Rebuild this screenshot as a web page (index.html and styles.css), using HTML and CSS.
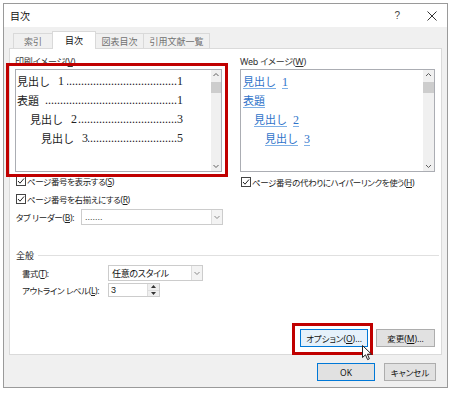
FILE: index.html
```html
<!DOCTYPE html>
<html lang="ja">
<head>
<meta charset="utf-8">
<title>目次</title>
<link rel="stylesheet" href="styles.css">
</head>
<body>
<div class="dialog">
  <div class="titlebar">
    <span class="title">目次</span>
    <span class="help">?</span>
    <svg class="close" width="10" height="10" viewBox="0 0 10 10"><path d="M0.5 0.5 L9.5 9.5 M9.5 0.5 L0.5 9.5" stroke="#333" stroke-width="1" fill="none"/></svg>
  </div>
  <div class="tabs">
    <div class="tab t1">索引</div>
    <div class="tab t2 active">目次</div>
    <div class="tab t3">図表目次</div>
    <div class="tab t4">引用文献一覧</div>
  </div>
  <div class="panel">
    <div class="columns">
      <div class="col col-left">
        <div class="label">印刷イメージ(<u>V</u>)</div>
        <div class="listbox">
          <div class="list-content">
            <div class="toc-row"><span class="jp">見出し</span><span class="num gap">1</span><span class="dots lead">.....................................</span><span class="num">1</span></div>
            <div class="toc-row"><span class="jp">表題</span><span class="dots lead">............................................</span><span class="num">1</span></div>
            <div class="toc-row lv2"><span class="jp">見出し</span><span class="num gap">2</span><span class="dots">.................................</span><span class="num">3</span></div>
            <div class="toc-row lv3"><span class="jp">見出し</span><span class="num gap">3</span><span class="dots">..............................</span><span class="num">5</span></div>
          </div>
          <div class="scrollbar">
            <svg class="arrow" width="10" height="10" viewBox="0 0 10 10"><path d="M2.5 6 L5 3.5 L7.5 6" stroke="#606060" stroke-width="1" fill="none"/></svg>
            <div class="thumb"></div>
            <div class="track"></div>
            <svg class="arrow" width="10" height="10" viewBox="0 0 10 10"><path d="M2.5 4 L5 6.5 L7.5 4" stroke="#606060" stroke-width="1" fill="none"/></svg>
          </div>
        </div>
        <div class="check">
          <span class="box"><svg width="8" height="8" viewBox="0 0 8 8"><path d="M1 4 L3 6.2 L7 1.5" stroke="#222" stroke-width="1" fill="none"/></svg></span>
          <span class="check-text">ページ番号を表示する(<u>S</u>)</span>
        </div>
        <div class="check">
          <span class="box"><svg width="8" height="8" viewBox="0 0 8 8"><path d="M1 4 L3 6.2 L7 1.5" stroke="#222" stroke-width="1" fill="none"/></svg></span>
          <span class="check-text">ページ番号を右揃えにする(<u>R</u>)</span>
        </div>
        <div class="leader-row">
          <span class="leader-label">タブ リーダー(<u>B</u>):</span>
          <div class="select select-leader">
            <span class="select-text">.......</span>
            <span class="select-btn"><svg width="8" height="8" viewBox="0 0 8 8"><path d="M1.5 3 L4 5.5 L6.5 3" stroke="#8a8a8a" stroke-width="1" fill="none"/></svg></span>
          </div>
        </div>
      </div>
      <div class="col col-right">
        <div class="label">Web イメージ(<u>W</u>)</div>
        <div class="listbox listbox-web">
          <div class="list-content">
            <div class="web-row"><span class="link"><span class="jp">見出し</span><span class="num gap">1</span></span></div>
            <div class="web-row"><span class="link"><span class="jp">表題</span></span></div>
            <div class="web-row lvw2"><span class="link"><span class="jp">見出し</span><span class="num gap">2</span></span></div>
            <div class="web-row lvw3"><span class="link"><span class="jp">見出し</span><span class="num gap">3</span></span></div>
          </div>
          <div class="scrollbar scrollbar-web">
            <svg class="arrow" width="11" height="10" viewBox="0 0 11 10"><path d="M3 6 L5.5 3.5 L8 6" stroke="#606060" stroke-width="1" fill="none"/></svg>
            <div class="thumb"></div>
            <div class="track"></div>
            <svg class="arrow" width="11" height="10" viewBox="0 0 11 10"><path d="M3 4 L5.5 6.5 L8 4" stroke="#606060" stroke-width="1" fill="none"/></svg>
          </div>
        </div>
        <div class="check">
          <span class="box"><svg width="8" height="8" viewBox="0 0 8 8"><path d="M1 4 L3 6.2 L7 1.5" stroke="#222" stroke-width="1" fill="none"/></svg></span>
          <span class="check-text">ページ番号の代わりにハイパーリンクを使う(<u>H</u>)</span>
        </div>
      </div>
    </div>
    <div class="group">
      <div class="group-head"><span>全般</span><span class="group-line"></span></div>
      <div class="group-row">
        <span class="group-label">書式(<u>T</u>):</span>
        <div class="select select-format">
          <span class="select-text dark">任意のスタイル</span>
          <span class="select-btn"><svg width="8" height="8" viewBox="0 0 8 8"><path d="M1.5 3 L4 5.5 L6.5 3" stroke="#8a8a8a" stroke-width="1" fill="none"/></svg></span>
        </div>
      </div>
      <div class="group-row row-level">
        <span class="group-label">アウトライン レベル(<u>L</u>):</span>
        <div class="spin">
          <span class="spin-text">3</span>
          <span class="spin-btns">
            <span class="spin-btn"><svg width="7" height="5" viewBox="0 0 7 5"><path d="M1 4 L3.5 1 L6 4 Z" fill="#333"/></svg></span>
            <span class="spin-btn"><svg width="7" height="5" viewBox="0 0 7 5"><path d="M1 1 L3.5 4 L6 1 Z" fill="#333"/></svg></span>
          </span>
        </div>
      </div>
    </div>
    <div class="panel-buttons">
      <button class="btn btn-hover btn-options">オプション(<u>O</u>)...</button>
      <button class="btn btn-change">変更(<u>M</u>)...</button>
    </div>
  </div>
  <div class="footer">
    <button class="btn btn-default btn-ok">OK</button>
    <button class="btn btn-cancel">キャンセル</button>
  </div>
  <div class="highlight hl-preview"></div>
  <div class="highlight hl-options"></div>
  <svg class="cursor" width="11" height="17" viewBox="0 0 11 17"><path d="M0.5 0.5 L0.5 12.5 L3.5 9.8 L5.6 14.6 L7.4 13.8 L5.4 9.2 L9.5 9.2 Z" fill="#fff" stroke="#222" stroke-width="1" stroke-linejoin="round"/></svg>
</div>
</body>
</html>
```

FILE: styles.css
```css
* {
  box-sizing: border-box;
}

body {
  margin: 0;
  background: #ffffff;
  font-family: "Noto Sans", "Noto Sans CJK JP", sans-serif;
  font-size: 9px;
  color: #1a1a1a;
  font-feature-settings: "palt";
}

u {
  text-decoration: underline;
  text-underline-offset: 1px;
}

.dialog {
  position: relative;
  margin: 3px 0 0 3px;
  width: 445px;
  height: 385px;
  border: 1px solid #9a9a9a;
  background: #f0f0f0;
  display: flex;
  flex-direction: column;
}

/* title bar */
.titlebar {
  height: 23px;
  flex: none;
  background: #ffffff;
  display: flex;
  align-items: center;
  padding-left: 6px;
}

.title {
  font-size: 10px;
  color: #111;
}

.help {
  margin-left: auto;
  font-family: "Liberation Sans", sans-serif;
  font-size: 10px;
  color: #444;
}

.close {
  margin-left: 27px;
  margin-right: 10px;
}

/* tabs */
.tabs {
  display: flex;
  align-items: flex-end;
  margin-top: 4px;
  padding-left: 9px;
  height: 17px;
  flex: none;
}

.tab {
  height: 15px;
  border: 1px solid #d9d9d9;
  border-bottom: none;
  background: #f0f0f0;
  color: #707070;
  font-size: 9px;
  display: flex;
  align-items: center;
  justify-content: center;
  margin-right: -1px;
}

.tab.active {
  height: 18px;
  margin-bottom: -1px;
  background: #ffffff;
  color: #111;
  position: relative;
  z-index: 1;
}

.t1 { width: 40px; }
.t2 { width: 44px; }
.t3 { width: 49px; }
.t4 { width: 67px; }

/* panel */
.panel {
  margin: 0 5px;
  height: 307px;
  flex: none;
  background: #ffffff;
  border: 1px solid #dadada;
  padding: 6px 6px 7px 5px;
  display: flex;
  flex-direction: column;
}

.columns {
  display: flex;
  gap: 18px;
}

.col-left {
  width: 207px;
}

.col-right {
  width: 195px;
}

.label {
  height: 14px;
  line-height: 14px;
  color: #333;
  letter-spacing: -0.2px;
}

.listbox {
  height: 103px;
  border: 1px solid #abadb3;
  display: flex;
  background: #fff;
}

.list-content {
  flex: 1;
  padding: 2px 0 0 1px;
  overflow: hidden;
}

.scrollbar {
  width: 10px;
  background: #f0f0f0;
  display: flex;
  flex-direction: column;
}

.scrollbar-web {
  width: 11px;
}

.arrow {
  flex: none;
  display: block;
}

.thumb {
  height: 11px;
  margin-top: 2px;
  background: #cdcdcd;
}

.track {
  flex: 1;
}

.toc-row {
  display: flex;
  align-items: center;
  height: 19px;
  width: 166px;
  font-family: "Liberation Serif", serif;
  font-size: 12px;
  line-height: 19px;
  color: #222;
  white-space: nowrap;
}

.jp {
  font-family: "Noto Sans CJK JP", sans-serif;
  font-size: 11px;
  font-feature-settings: normal;
}

.num {
  font-family: "Liberation Serif", serif;
}

.gap {
  margin-left: 8px;
}

.toc-row .dots {
  flex: 1;
  overflow: hidden;
  direction: rtl;
}

.toc-row .lead {
  margin-left: 3px;
}

.lv2 { padding-left: 13px; }
.lv3 { padding-left: 24px; }

.web-row {
  display: flex;
  align-items: center;
  height: 19px;
  font-family: "Liberation Serif", serif;
  font-size: 12px;
  line-height: 19px;
  padding-left: 1px;
  white-space: nowrap;
}

.web-row .gap {
  margin-left: 6px;
}

.lvw2 { padding-left: 12px; }
.lvw3 { padding-left: 23px; }

.link {
  color: #2f73c9;
  text-decoration: underline;
  text-decoration-color: #7fb0e6;
  text-underline-offset: 2px;
}

/* checkboxes */
.check {
  display: flex;
  align-items: center;
  height: 18px;
  margin-left: 1px;
  color: #222;
  white-space: nowrap;
}

.check-text {
  font-size: 8.5px;
  letter-spacing: -0.4px;
}

.col-left .check:first-of-type,
.col-right .check {
  margin-top: 1px;
}

.box {
  width: 10px;
  height: 10px;
  flex: none;
  border: 1px solid #444;
  margin-right: 1px;
  display: flex;
  align-items: center;
  justify-content: center;
  background: #fff;
}

.box svg {
  display: block;
}

/* tab leader */
.leader-row {
  display: flex;
  align-items: center;
  height: 16px;
  margin-top: 1px;
  margin-left: 1px;
}

.leader-label {
  width: 65px;
  flex: none;
  white-space: nowrap;
  color: #222;
  font-size: 8.5px;
  letter-spacing: -0.3px;
}

.select {
  height: 16px;
  flex: none;
  border: 1px solid #cccccc;
  display: flex;
  align-items: center;
  background: #fff;
}

.select-leader {
  width: 142px;
}

.select-text {
  flex: 1;
  padding-left: 3px;
  color: #444;
  font-family: "Liberation Sans", sans-serif;
}

.select-text.dark {
  color: #111;
  font-family: "Noto Sans", "Noto Sans CJK JP", sans-serif;
  letter-spacing: -0.3px;
}

.select-btn {
  width: 11px;
  height: 100%;
  border-left: 1px solid #dddddd;
  background: #f3f3f3;
  display: flex;
  align-items: center;
  justify-content: center;
}

/* group */
.group {
  margin-top: 23px;
}

.group-head {
  display: flex;
  align-items: center;
  height: 14px;
  margin-left: 1px;
  margin-right: -4px;
  color: #222;
}

.group-line {
  flex: 1;
  border-top: 1px solid #e0e0e0;
  margin-left: 4px;
}

.group-row {
  display: flex;
  align-items: center;
  height: 16px;
  margin-top: 3px;
  margin-left: 7px;
}

.row-level {
  height: 14px;
  margin-top: 2px;
}

.group-label {
  width: 86px;
  flex: none;
  white-space: nowrap;
  color: #222;
  font-size: 8.5px;
  letter-spacing: -0.4px;
}

.select-format {
  width: 95px;
}

.spin {
  width: 52px;
  height: 14px;
  flex: none;
  border: 1px solid #cccccc;
  display: flex;
  background: #fff;
}

.spin-text {
  flex: 1;
  padding-left: 2px;
  line-height: 12px;
  font-family: "Liberation Sans", sans-serif;
}

.spin-btns {
  width: 12px;
  border-left: 1px solid #dddddd;
  display: flex;
  flex-direction: column;
}

.spin-btn {
  flex: 1;
  display: flex;
  align-items: center;
  justify-content: center;
  background: #efefef;
}

.spin-btn + .spin-btn {
  border-top: 1px solid #dddddd;
}

/* buttons */
.panel-buttons {
  margin-top: auto;
  display: flex;
  justify-content: flex-end;
  gap: 8px;
}

.btn {
  height: 18px;
  border: 1px solid #adadad;
  background: #e1e1e1;
  font-family: "Noto Sans", "Noto Sans CJK JP", sans-serif;
  font-size: 8.5px;
  color: #111;
  padding: 0;
  font-feature-settings: "palt";
  display: flex;
  align-items: center;
  justify-content: center;
  white-space: nowrap;
}

.btn-hover {
  background: #e5f1fb;
  border-color: #0078d7;
}

.btn-default {
  border-color: #0078d7;
  background: #e1e1e1;
}

.btn-options { width: 68px; }
.btn-change { width: 59px; }

.footer {
  display: flex;
  justify-content: flex-end;
  gap: 9px;
  margin-top: 8px;
  padding-right: 11px;
}

.btn-ok { width: 58px; }
.btn-cancel { width: 52px; }

/* annotations */
.highlight {
  position: absolute;
  border: 3px solid #c00000;
  pointer-events: none;
}

.hl-preview {
  left: 2px;
  top: 59px;
  width: 222px;
  height: 114px;
}

.hl-options {
  left: 288px;
  top: 319px;
  width: 81px;
  height: 32px;
}

.cursor {
  position: absolute;
  left: 358px;
  top: 341px;
}
```
